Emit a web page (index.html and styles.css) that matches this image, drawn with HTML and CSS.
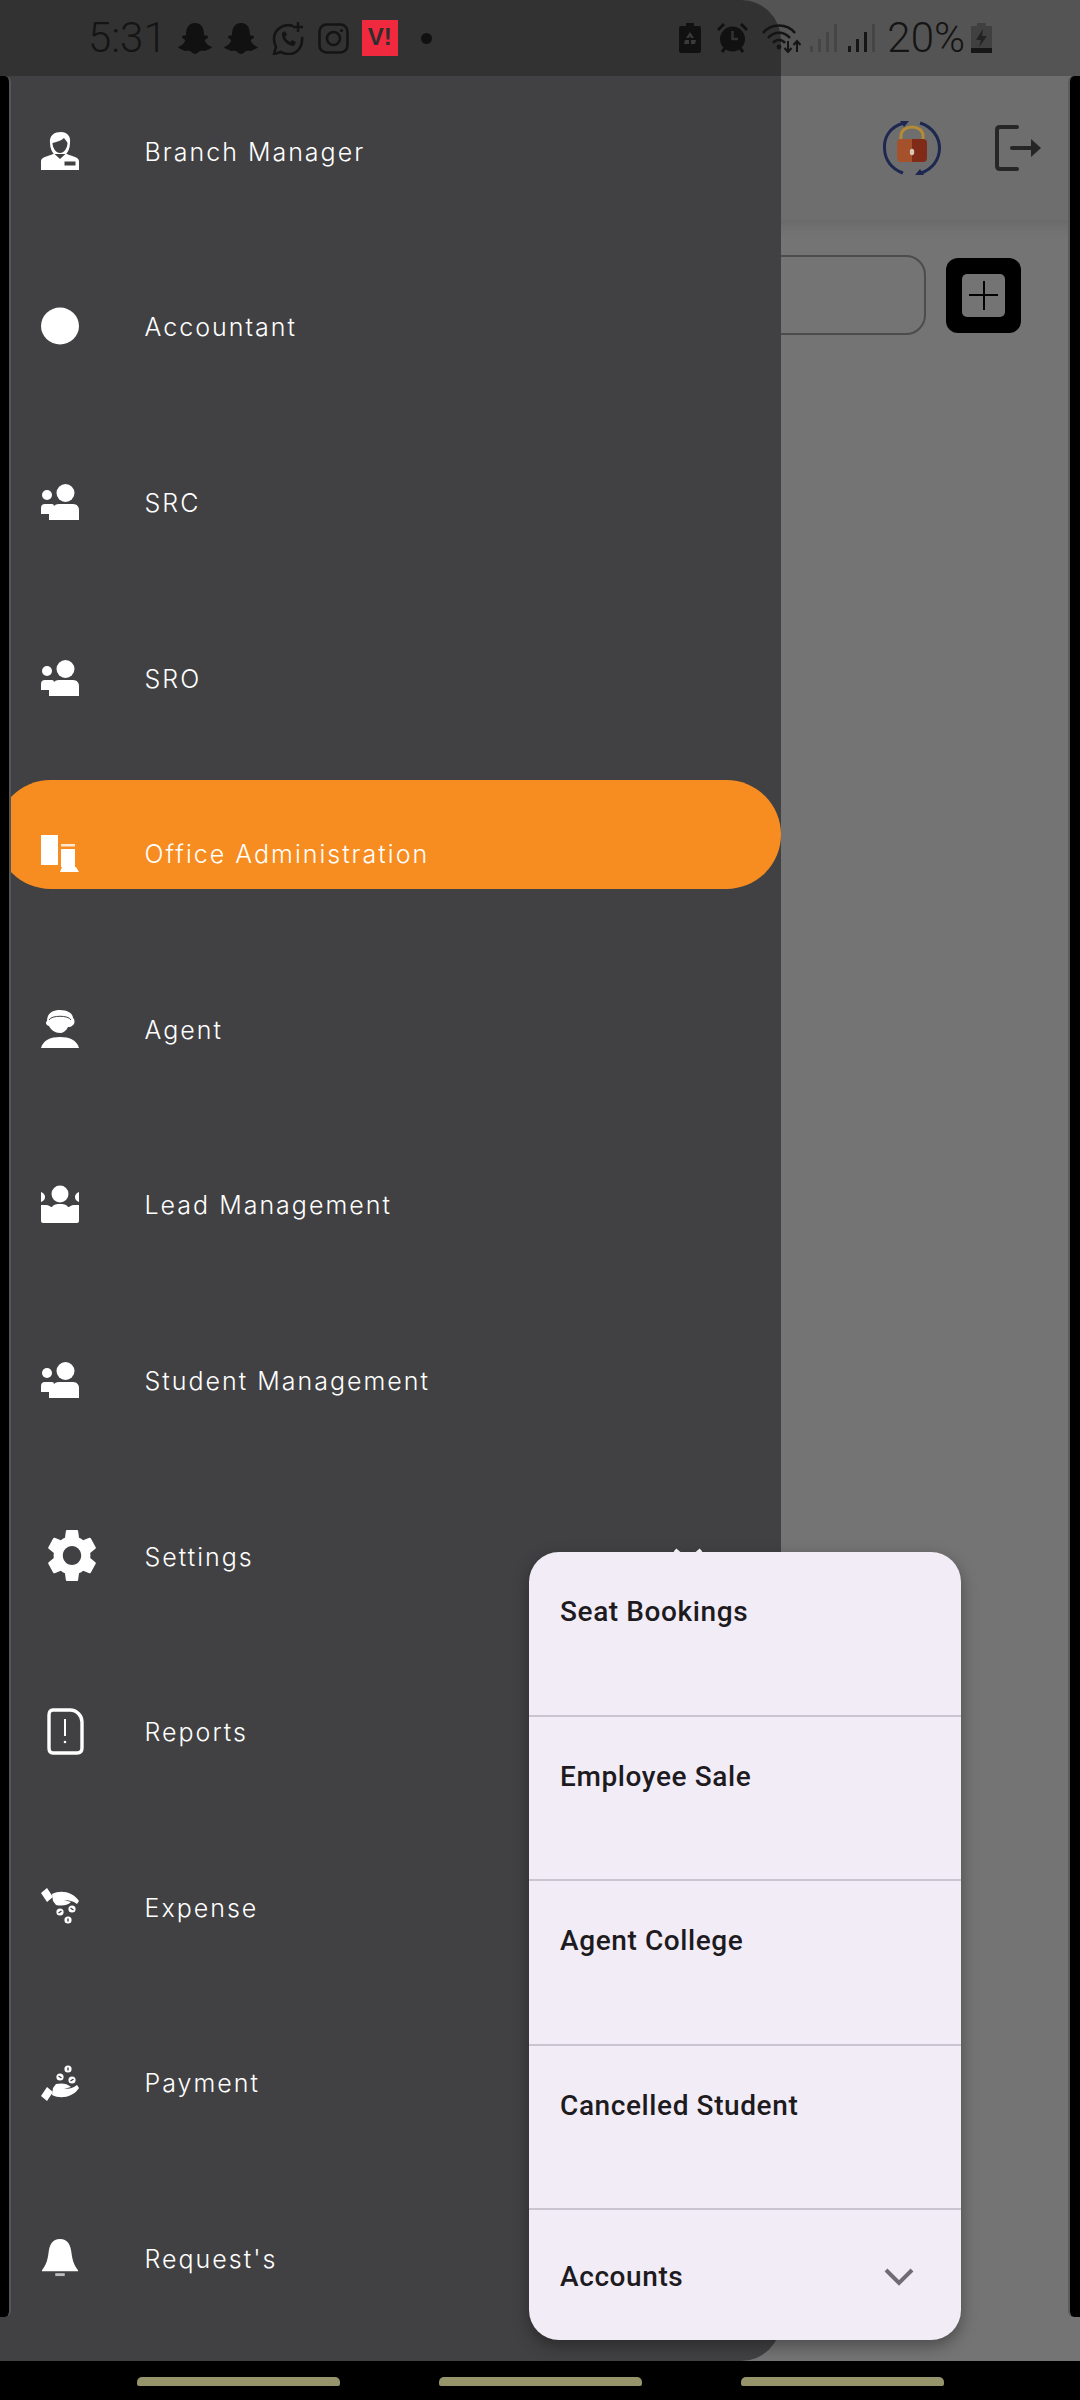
FILE: index.html
```html
<!DOCTYPE html>
<html lang="en">
<head>
    <meta charset="UTF-8">
    <meta name="viewport" content="width=device-width, initial-scale=1.0">
    <title>Office Administration</title>
    <link rel="stylesheet" href="styles.css">
</head>
<body>
    <div id="screen">
        <!-- page behind the drawer -->
        <div class="base">
            <header class="appbar">
                <svg class="lock-icon" viewBox="0 0 58 54">
                    <path d="M21 2 C6 6 1 17 1.500 27 C1.500 38 8 48 20 52 M37 2 C50 6 56.500 17 56.500 27 C56.500 38 50 48 38 52" fill="none" stroke="#1d2850" stroke-width="3"/>
                    <path d="M17 0 L26 0 L21 6 Z M41 54 L32 54 L37 48 Z" fill="#1d2850"/>
                    <path d="M18 19 V15 C18 3 40 3 40 15 V19" fill="none" stroke="#b48a35" stroke-width="3"/>
                    <path d="M14 22 C14 19 16 18 18 18 H29 V41 H18 C16 41 14 40 14 37 Z" fill="#a5512c"/>
                    <path d="M29 18 H40 C42 18 44 19 44 22 V37 C44 40 42 41 40 41 H29 Z" fill="#7f2b17"/>
                    <ellipse cx="29" cy="31" rx="2.200" ry="3.200" fill="#d8c8b8"/>
                </svg>
                <svg class="logout-icon" viewBox="0 0 46 46">
                    <path d="M22 2 H5 Q2 2 2 5 V41 Q2 44 5 44 H22" fill="none" stroke="#262626" stroke-width="4" stroke-linecap="round"/>
                    <path d="M17 23 H36" stroke="#262626" stroke-width="4" stroke-linecap="round"/>
                    <path d="M36 14 L46 23 L36 32 Z" fill="#262626"/>
                </svg>
            </header>
            <main class="content">
                <div class="search-row">
                    <div class="search-box"></div>
                    <button type="button" class="add-btn"><span class="add-inner"></span></button>
                </div>
                <div class="scroll-thumb"></div>
            </main>
            <footer class="navbar">
                <span class="nav-pill"></span>
                <span class="nav-pill"></span>
                <span class="nav-pill"></span>
            </footer>
        </div>

        <div class="edge edge-right"></div>

        <!-- drawer -->
        <aside class="drawer">
            <div class="edge edge-left"></div>
            <ul class="menu">
                <li class="menu-item">
                    <span class="menu-icon">
                        <svg class="icon" viewBox="0 0 38 38">
                            <path d="M9 11 C8 3 14 0 20 0 C26 0 30 4 29 11 C29 16 27 20 25 22 H13 C11 20 9 16 9 11 Z" fill="#fff"/>
                            <path d="M11.500 11 C15 10 20 9 23 6 C24 8 26 9 26.500 11 C26.500 16 23 21 19 21 C15 21 11.500 16 11.500 11 Z" fill="#414143"/>
                            <path d="M0 38 V29 C0 25 8 24 13 21.500 L19 27 L25 21.500 C30 24 38 25 38 29 V38 Z" fill="#fff"/>
                            <rect x="23.500" y="29.500" width="11" height="4" fill="#414143"/>
                        </svg>
                    </span>
                    <span class="menu-label">Branch Manager</span>
                </li>
                <li class="menu-item">
                    <span class="menu-icon">
                        <svg class="icon" viewBox="0 0 38 38"><ellipse cx="19" cy="19" rx="19" ry="18.500" fill="#fff"/></svg>
                    </span>
                    <span class="menu-label">Accountant</span>
                </li>
                <li class="menu-item">
                    <span class="menu-icon">
                        <svg class="icon" viewBox="0 0 38 38"><use href="#group"/></svg>
                    </span>
                    <span class="menu-label">SRC</span>
                </li>
                <li class="menu-item">
                    <span class="menu-icon">
                        <svg class="icon" viewBox="0 0 38 38"><use href="#group"/></svg>
                    </span>
                    <span class="menu-label">SRO</span>
                </li>
                <li class="menu-item active">
                    <span class="menu-icon">
                        <svg class="icon" viewBox="0 0 38 38">
                            <rect x="0" y="1" width="17" height="30" fill="#fff"/>
                            <rect x="20" y="10" width="14" height="2.500" fill="#fff" opacity=".8"/>
                            <rect x="20" y="15" width="14" height="18" fill="#fff"/>
                            <path d="M21 33 H35 L38 38 H19 Z" fill="#fff"/>
                        </svg>
                    </span>
                    <span class="menu-label">Office Administration</span>
                </li>
                <li class="menu-item">
                    <span class="menu-icon">
                        <svg class="icon" viewBox="0 0 38 38">
                            <path d="M6 11 C6 3 12 0 19 0 C26 0 32 3 32 8 C34 9 34 14 32 15 C30 17 29 17 27 17 C25 21 22 23 19 23 C14 23 10 20 8 16 C5 15 4 12 6 11 Z" fill="#fff"/>
                            <path d="M8 10 C10 5 28 5 30 10" fill="none" stroke="#414143" stroke-width="1"/>
                            <path d="M0 38 C2 30 10 27 19 27 C28 27 36 30 38 38 Z" fill="#fff"/>
                        </svg>
                    </span>
                    <span class="menu-label">Agent</span>
                </li>
                <li class="menu-item">
                    <span class="menu-icon">
                        <svg class="icon" viewBox="0 0 38 38">
                            <circle cx="19" cy="9" r="8.500" fill="#fff"/>
                            <path d="M0 7 C3 8 4 10 4 12 C4 15 2 16 0 17 Z M38 7 C35 8 34 10 34 12 C34 15 36 16 38 17 Z" fill="#fff"/>
                            <path d="M0 20 H5 C8 20 9 22 11 22 C13 19 16 19 19 19 C22 19 25 19 27 22 C29 22 30 20 33 20 H38 V36 Q38 38 36 38 H2 Q0 38 0 36 Z" fill="#fff"/>
                        </svg>
                    </span>
                    <span class="menu-label">Lead Management</span>
                </li>
                <li class="menu-item">
                    <span class="menu-icon">
                        <svg class="icon" viewBox="0 0 38 38"><use href="#group"/></svg>
                    </span>
                    <span class="menu-label">Student Management</span>
                </li>
                <li class="menu-item">
                    <span class="menu-icon">
                        <svg class="icon-gear" viewBox="2.600 2.400 18.800 19.200" preserveAspectRatio="none">
                            <path fill="#fff" d="M19.14,12.94c0.04-0.3,0.06-0.61,0.06-0.94c0-0.32-0.02-0.64-0.07-0.94l2.03-1.58c0.18-0.14,0.23-0.41,0.12-0.61 l-1.92-3.32c-0.12-0.22-0.37-0.29-0.59-0.22l-2.39,0.96c-0.5-0.38-1.03-0.7-1.62-0.94L14.4,2.81c-0.04-0.24-0.24-0.41-0.48-0.41 h-3.84c-0.24,0-0.43,0.17-0.47,0.41L9.25,5.35C8.66,5.59,8.12,5.92,7.63,6.29L5.24,5.33c-0.22-0.08-0.47,0-0.59,0.22L2.74,8.87 C2.62,9.08,2.66,9.34,2.86,9.48l2.03,1.58C4.84,11.36,4.8,11.69,4.8,12s0.02,0.64,0.07,0.94l-2.03,1.58 c-0.18,0.14-0.23,0.41-0.12,0.61l1.92,3.32c0.12,0.22,0.37,0.29,0.59,0.22l2.39-0.96c0.5,0.38,1.03,0.7,1.62,0.94l0.36,2.54 c0.05,0.24,0.24,0.41,0.48,0.41h3.84c0.24,0,0.44-0.17,0.47-0.41l0.36-2.54c0.59-0.24,1.13-0.56,1.62-0.94l2.39,0.96 c0.22,0.08,0.47,0,0.59-0.22l1.92-3.32c0.12-0.22,0.07-0.47-0.12-0.61L19.14,12.94z M12,15.6c-1.98,0-3.6-1.62-3.6-3.6 s1.62-3.6,3.6-3.6s3.6,1.62,3.6,3.6S13.98,15.6,12,15.6z"/>
                        </svg>
                    </span>
                    <span class="menu-label">Settings</span>
                    <svg class="menu-chevron" viewBox="0 0 30 16"><path d="M2 2 L15 13 L28 2" fill="none" stroke="#fff" stroke-width="4"/></svg>
                </li>
                <li class="menu-item">
                    <span class="menu-icon">
                        <svg class="icon-report" viewBox="0 0 37 47">
                            <path d="M6 2 H23 C30 2 35 8 35 14 V40 Q35 45 30 45 H6 Q2 45 2 40 V7 Q2 2 6 2 Z" fill="none" stroke="#fff" stroke-width="3.400"/>
                            <path d="M18 11 V28" stroke="#fff" stroke-width="2"/>
                            <circle cx="18" cy="34" r="1.300" fill="#fff"/>
                        </svg>
                    </span>
                    <span class="menu-label">Reports</span>
                </li>
                <li class="menu-item">
                    <span class="menu-icon">
                        <svg class="icon" viewBox="0 0 38 38"><use href="#hand-coins"/></svg>
                    </span>
                    <span class="menu-label">Expense</span>
                </li>
                <li class="menu-item">
                    <span class="menu-icon">
                        <svg class="icon flip" viewBox="0 0 38 38"><use href="#hand-coins"/></svg>
                    </span>
                    <span class="menu-label">Payment</span>
                </li>
                <li class="menu-item">
                    <span class="menu-icon">
                        <svg class="icon" viewBox="0 0 38 40">
                            <path d="M19 0 C11 0 8 6 7 14 C6 24 3 29 0 33 V34 H38 V33 C35 29 32 24 31 14 C30 6 27 0 19 0 Z" fill="#fff"/>
                            <rect x="14" y="36" width="10" height="3" fill="#bdbdbd"/>
                        </svg>
                    </span>
                    <span class="menu-label">Request's</span>
                </li>
            </ul>
        </aside>

        <!-- status bar sits on top of everything -->
        <div class="statusbar">
            <div class="status-left">
                <span class="status-text time">5:31</span>
                <svg class="s-ghost" viewBox="0 0 34 31"><use href="#ghost"/></svg>
                <svg class="s-ghost" viewBox="0 0 34 31"><use href="#ghost"/></svg>
                <svg class="s-whatsapp" viewBox="0 0 34 34">
                    <path d="M22 5 C13 2 3 8 3 18 C3 21 4 24 5 26 L3 33 L10 31 C13 33 16 33 19 33 C27 32 32 25 31 16" fill="none" stroke="#141414" stroke-width="2.600"/>
                    <path d="M11 12 C10 18 16 25 23 25 L25 21 L21 19 L19 21 C17 20 15 18 14 16 L16 14 L14 10 Z" fill="#141414"/>
                    <path d="M27 1 V11 M22 6 H32" stroke="#141414" stroke-width="2.400"/>
                </svg>
                <svg class="s-insta" viewBox="0 0 31 31">
                    <rect x="1.500" y="1.500" width="28" height="28" rx="7" fill="none" stroke="#141414" stroke-width="2.600"/>
                    <circle cx="15.500" cy="15.500" r="6.500" fill="none" stroke="#141414" stroke-width="2.600"/>
                    <circle cx="23.500" cy="7.500" r="1.600" fill="#141414"/>
                </svg>
                <span class="s-vi">V!</span>
                <span class="s-dot"></span>
            </div>
            <div class="status-right">
                <svg class="s-recycle" viewBox="0 0 22 30">
                    <path d="M7 0 H15 V3 H20 Q22 3 22 5 V28 Q22 30 20 30 H2 Q0 30 0 28 V5 Q0 3 2 3 H7 Z" fill="#111"/>
                    <path d="M11 9 L15 15 H12 L11 13 L10 15 H7 Z M6 17 H10 V21 H5 Z M12 17 H17 L16 21 H12 Z" fill="#3a3a3a"/>
                </svg>
                <svg class="s-alarm" viewBox="0 0 31 30">
                    <circle cx="15.500" cy="16" r="12.500" fill="#111"/>
                    <path d="M1 7 L7 1 M30 7 L24 1 M5 29 L8 25 M26 29 L23 25" stroke="#111" stroke-width="3"/>
                    <path d="M15.500 8 V16 H21" fill="none" stroke="#333" stroke-width="2.400"/>
                </svg>
                <svg class="s-wifi" viewBox="0 0 40 30">
                    <path d="M1 10 C9 0 25 0 33 10 M6 15 C12 8 22 8 28 15 M11 20 C14 16 20 16 23 20" fill="none" stroke="#141414" stroke-width="2.600"/>
                    <circle cx="17" cy="24" r="2.400" fill="#141414"/>
                    <path d="M26 18 V28 M22.500 25 L26 29 L29.500 25 M35 29 V19 M31.500 22 L35 18 L38.500 22" fill="none" stroke="#141414" stroke-width="2"/>
                </svg>
                <svg class="s-signal" viewBox="0 0 28 28">
                    <rect x="0" y="22" width="3" height="6" fill="#454545"/>
                    <rect x="8" y="15" width="3" height="13" fill="#454545"/>
                    <rect x="16" y="8" width="3" height="20" fill="#454545"/>
                    <rect x="24" y="0" width="3" height="28" fill="#454545"/>
                </svg>
                <svg class="s-signal s-signal-b" viewBox="0 0 28 28">
                    <rect x="0" y="22" width="3" height="6" fill="#161616"/>
                    <rect x="8" y="15" width="3" height="13" fill="#161616"/>
                    <rect x="16" y="8" width="3" height="20" fill="#161616"/>
                    <rect x="24" y="0" width="3" height="28" fill="#454545"/>
                </svg>
                <span class="status-text battery-text">20%</span>
                <svg class="s-battery" viewBox="0 0 21 30">
                    <path d="M6 0 H15 V3 H21 V30 H0 V3 H6 Z" fill="#404040"/>
                    <rect x="0" y="25" width="21" height="5" fill="#161616"/>
                    <path d="M12 6 L5 17 H10 L8 24 L16 13 H11 Z" fill="#222"/>
                </svg>
            </div>
        </div>

        <!-- popup opened from Settings -->
        <div class="popup">
            <div class="popup-item">Seat Bookings</div>
            <div class="popup-item">Employee Sale</div>
            <div class="popup-item">Agent College</div>
            <div class="popup-item">Cancelled Student</div>
            <div class="popup-item popup-last">
                <span>Accounts</span>
                <svg class="popup-chevron" viewBox="0 0 30 18"><path d="M2 2 L15 15 L28 2" fill="none" stroke="#6f6c75" stroke-width="4"/></svg>
            </div>
        </div>

        <svg class="defs" width="0" height="0">
            <defs>
                <g id="group">
                    <circle cx="24.500" cy="10" r="9" fill="#fff"/>
                    <circle cx="6" cy="12" r="5" fill="#fff"/>
                    <path d="M0 25 Q0 21 4 21 H11 Q13 21 13 23 C15 21 17 21 20 21 H32 C36 21 38 24 38 27 V37 H8 V31 H0 Z" fill="#fff"/>
                </g>
                <g id="hand-coins">
                    <path d="M0 5 L6 0 L12 9 L6 14 Z" fill="#fff"/>
                    <path d="M11 6 C17 3 24 3 30 6 C34 8 36 10 38 13 L36 16 C32 13 28 12 23 12 L30 14 C26 18 20 18 15 17 L12 13 Z" fill="#fff"/>
                    <circle cx="19" cy="24" r="3.600" fill="#fff"/>
                    <circle cx="31" cy="21" r="3.600" fill="#fff"/>
                    <circle cx="27" cy="32" r="3.600" fill="#fff"/>
                    <path d="M17.500 25 L20.500 23 M29.500 20 L32.500 22 M27 30.500 V33.500" stroke="#414143" stroke-width="1.400"/>
                </g>
                <path id="ghost" fill="#111" d="M17 0 C24 0 26 6 26 12 C28 13 30 12 30 14 C30 16 26 16 27 18 C28 21 31 23 34 24 C33 26 30 26 29 27 C27 29 25 27 22 28 C20 30 18 31 17 31 C16 31 14 30 12 28 C9 27 7 29 5 27 C4 26 1 26 0 24 C3 23 6 21 7 18 C8 16 4 16 4 14 C4 12 6 13 8 12 C8 6 10 0 17 0 Z"/>
            </defs>
        </svg>
    </div>
</body>
</html>
```

FILE: styles.css
```css
* {
    box-sizing: border-box;
}

body {
    margin: 0;
    background-color: #000;
    font-family: "Inter", "Liberation Sans", sans-serif;
}

#screen {
    position: relative;
    width: 1080px;
    height: 2400px;
    overflow: hidden;
}

.defs {
    position: absolute;
}

/* page behind the drawer */
.base {
    display: flex;
    flex-direction: column;
    height: 100%;
    background-color: #747474;
}

.appbar {
    display: flex;
    align-items: center;
    justify-content: flex-end;
    height: 220px;
    padding: 76px 39px 0 0;
    background-color: #6e6e6e;
    box-shadow: 0 4px 14px rgba(0, 0, 0, 0.12);
}

.lock-icon {
    width: 58px;
    height: 54px;
    margin-right: 54px;
}

.logout-icon {
    width: 46px;
    height: 46px;
}

.content {
    position: relative;
    flex: 1;
    padding: 35px 59px 0 40px;
}

.search-row {
    display: flex;
    align-items: center;
    gap: 20px;
}

.search-box {
    flex: 1;
    height: 80px;
    border: 2px solid #4c4c4c;
    border-radius: 20px;
}

.add-btn {
    display: flex;
    align-items: center;
    justify-content: center;
    width: 75px;
    height: 75px;
    padding: 0;
    border: none;
    border-radius: 12px;
    background-color: #000;
}

.add-inner {
    position: relative;
    width: 43px;
    height: 43px;
    border-radius: 5px;
    background:
        linear-gradient(#000, #000) center / 29px 2px no-repeat,
        linear-gradient(#000, #000) center / 2px 29px no-repeat,
        #747474;
}

.scroll-thumb {
    position: absolute;
    top: 107px;
    right: 10px;
    width: 2px;
    height: 270px;
    background-color: #8c8c8c;
}

.navbar {
    display: flex;
    justify-content: center;
    gap: 99px;
    height: 39px;
    padding-top: 16px;
    background-color: #000;
}

.nav-pill {
    width: 203px;
    height: 9px;
    border-radius: 5px 5px 2px 2px;
    background-color: #95946a;
}

/* side bars */
.edge {
    position: absolute;
    top: 76px;
    height: 2241px;
    background-color: #000;
}

.edge-left {
    left: 0;
    z-index: 1;
    width: 11px;
    border-right: 2px solid #555;
    border-radius: 0 6px 6px 0;
}

.edge-right {
    right: 0;
    width: 12px;
    border-left: 2px solid #5c5c5c;
    border-radius: 6px 0 0 6px;
}

/* drawer */
.drawer {
    position: absolute;
    top: 0;
    left: 0;
    width: 781px;
    height: 2361px;
    padding-top: 63px;
    border-radius: 0 40px 40px 0;
    background-color: #414143;
}

.menu {
    margin: 0;
    padding: 0;
    list-style: none;
}

.menu-item {
    position: relative;
    display: flex;
    align-items: center;
    height: 175.600px;
}

.menu-item.active::before {
    content: "";
    position: absolute;
    top: 15px;
    left: -4px;
    right: 0;
    height: 109px;
    border-radius: 55px;
    background-color: #f78d21;
}

.menu-icon {
    position: relative;
    display: flex;
    flex: none;
    align-items: center;
    width: 144.500px;
    padding-left: 41px;
}

.icon {
    width: 38px;
    height: 38px;
}

.flip {
    transform: scaleY(-1);
}

.icon-gear {
    width: 48px;
    height: 51px;
    margin-left: 7px;
}

.icon-report {
    width: 37px;
    height: 47px;
    margin-left: 6px;
}

.menu-label {
    position: relative;
    padding-top: 2px;
    font-size: 25px;
    font-weight: 300;
    letter-spacing: 2px;
    color: #fff;
}

.menu-chevron {
    width: 30px;
    height: 16px;
    margin-left: auto;
    margin-right: 78px;
}

/* status bar */
.statusbar {
    position: absolute;
    top: 0;
    left: 0;
    display: flex;
    align-items: center;
    justify-content: space-between;
    width: 1080px;
    height: 76px;
    padding: 0 88px 0 88px;
    background-color: rgba(0, 0, 0, 0.23);
}

.status-left,
.status-right {
    display: flex;
    align-items: center;
}

.status-text {
    font-family: "Roboto", "Liberation Sans", sans-serif;
    font-size: 42px;
    font-weight: 300;
    line-height: 40px;
    color: #141414;
}

.time {
    margin-right: 11px;
}

.s-ghost {
    width: 34px;
    height: 31px;
    margin-right: 12.500px;
}

.s-whatsapp {
    width: 34px;
    height: 34px;
    margin-right: 13px;
}

.s-insta {
    width: 31px;
    height: 31px;
    margin-right: 13px;
}

.s-vi {
    width: 36px;
    height: 36px;
    font-family: "Liberation Sans", sans-serif;
    font-size: 24px;
    font-weight: 700;
    line-height: 34px;
    text-align: center;
    color: #2e2e2e;
    background-color: #f0293e;
}

.s-dot {
    width: 11px;
    height: 11px;
    margin-left: 23px;
    border-radius: 50%;
    background-color: #111;
}

.s-recycle {
    width: 22px;
    height: 30px;
    margin-right: 16px;
}

.s-alarm {
    width: 31px;
    height: 30px;
    margin-right: 14px;
}

.s-wifi {
    width: 40px;
    height: 30px;
    margin-right: 8px;
}

.s-signal {
    width: 28px;
    height: 28px;
    margin-right: 10px;
}

.s-signal-b {
    margin-right: 11px;
}

.battery-text {
    margin-right: 6px;
}

.s-battery {
    width: 21px;
    height: 30px;
}

/* popup */
.popup {
    position: absolute;
    top: 1552px;
    left: 529px;
    width: 432px;
    height: 788px;
    border-radius: 30px;
    background-color: #f2ecf7;
    box-shadow: 0 6px 16px rgba(0, 0, 0, 0.35);
    font-family: "Roboto", "Liberation Sans", sans-serif;
    font-size: 28px;
    font-weight: 500;
    letter-spacing: 0.6px;
    color: #1d1b20;
}

.popup-item {
    height: 164.600px;
    padding: 41px 31px 0;
    line-height: 38px;
    border-bottom: 2px solid #cac4d0;
}

.popup-last {
    display: flex;
    align-items: center;
    justify-content: space-between;
    height: 130px;
    padding: 3px 47px 0 31px;
    border-bottom: none;
}

.popup-chevron {
    width: 30px;
    height: 18px;
}
```
